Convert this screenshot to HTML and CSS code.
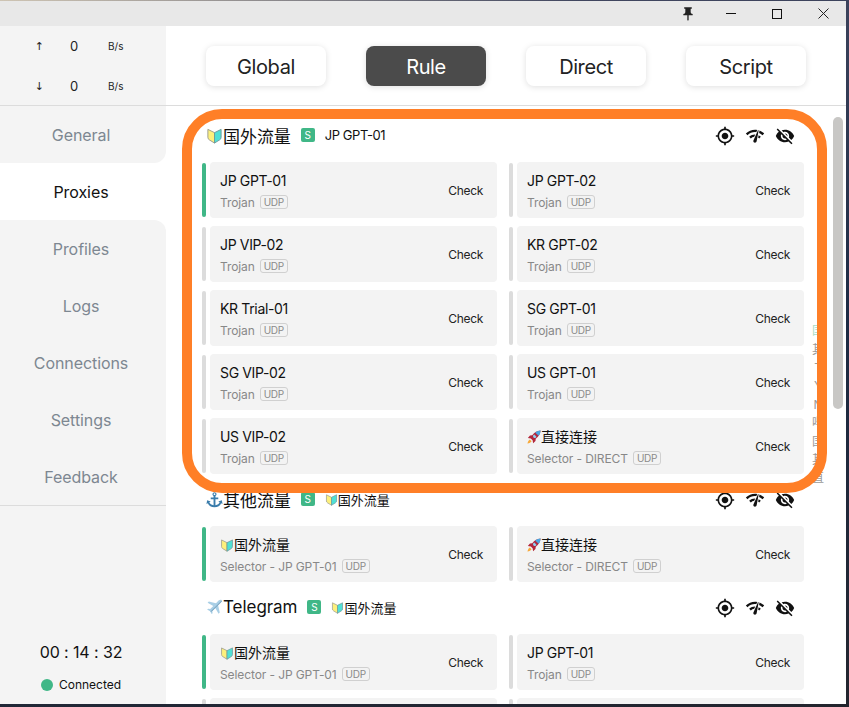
FILE: index.html
```html
<!DOCTYPE html>
<html lang="zh">
<head>
<meta charset="utf-8">
<title>Clash</title>
<link rel="stylesheet" href="styles.css">
</head>
<body>
<svg class="defs" aria-hidden="true">
  <symbol id="i-gps" viewBox="0 0 24 24"><path d="M12 8c-2.21 0-4 1.79-4 4s1.79 4 4 4 4-1.79 4-4-1.79-4-4-4zm8.94 3c-.46-4.17-3.77-7.48-7.94-7.94V1h-2v2.06C6.83 3.52 3.52 6.83 3.06 11H1v2h2.06c.46 4.17 3.77 7.48 7.94 7.94V23h2v-2.06c4.17-.46 7.48-3.77 7.94-7.94H23v-2h-2.06zM12 19c-3.87 0-7-3.13-7-7s3.13-7 7-7 7 3.13 7 7-3.13 7-7 7z"/></symbol>
  <symbol id="i-net" viewBox="0 0 24 24"><path d="M15.9 5c-.17 0-.32.09-.41.23l-.07.15-5.18 11.65c-.16.29-.26.61-.26.96 0 1.11.9 2.01 2.01 2.01.96 0 1.77-.68 1.96-1.59l.01-.03L16.4 5.5c0-.28-.22-.5-.5-.5zM1 9l2 2c2.88-2.88 6.79-4.08 10.53-3.62l1.19-2.68C9.89 3.84 4.74 5.27 1 9zm20 2l2-2c-1.64-1.64-3.55-2.82-5.59-3.57l-.53 2.82c1.5.62 2.9 1.53 4.12 2.75zm-4 4l2-2c-.8-.8-1.7-1.42-2.66-1.89l-.55 2.92c.42.27.83.59 1.21.97zM5 13l2 2c1.13-1.13 2.56-1.79 4.03-2l1.28-2.88c-2.63-.08-5.3.87-7.31 2.88z"/></symbol>
  <symbol id="i-eye" viewBox="0 0 24 24"><path d="M12 7c2.76 0 5 2.24 5 5 0 .65-.13 1.26-.36 1.83l2.92 2.92c1.51-1.26 2.7-2.89 3.43-4.75-1.73-4.39-6-7.5-11-7.5-1.4 0-2.74.25-3.98.7l2.16 2.16C10.74 7.13 11.35 7 12 7zM2 4.27l2.28 2.28.46.46C3.08 8.3 1.78 10.02 1 12c1.73 4.39 6 7.5 11 7.5 1.55 0 3.03-.3 4.38-.84l.42.42L19.73 22 21 20.73 3.27 3 2 4.27zM7.53 9.8l1.55 1.55c-.05.21-.08.43-.08.65 0 1.66 1.34 3 3 3 .22 0 .44-.03.65-.08l1.55 1.55c-.67.33-1.41.53-2.2.53-2.76 0-5-2.24-5-5 0-.79.2-1.53.53-2.2zm4.31-.78l3.15 3.15.02-.16c0-1.66-1.34-3-3-3l-.17.01z"/></symbol>
  <symbol id="e-shield" viewBox="0 0 16 18">
    <path d="M1 2.5 8 6v11L2.500 13.600Q1 12.700 1 11z" fill="#fdf07c" stroke="#9a9a8c" stroke-width="1"/>
    <path d="M15 2.500 8 6v11l5.500-3.400Q15 12.700 15 11z" fill="#4fe0d6" stroke="#6f9a9a" stroke-width="1"/>
  </symbol>
  <symbol id="e-anchor" viewBox="0 0 18 18">
    <path d="M9 1.200a2.200 2.200 0 0 1 1 4.150V7h3v1.800h-3v6.300c2.300-.3 3.900-1.500 4.500-3.100L13 11l3.800-1.200.7 4-1.500-.8C15 15.500 12.500 17.300 9 17.300S3 15.500 2 13l-1.500.8.7-4L5 11l-1.500 1c.6 1.600 2.200 2.800 4.500 3.100V8.800H5V7h3V5.350A2.200 2.200 0 0 1 9 1.200zm0 1.300a.9.900 0 1 0 0 1.800.9.900 0 0 0 0-1.800z" fill="#3a7cab"/>
  </symbol>
  <symbol id="e-plane" viewBox="0 0 18 18">
    <path d="M16.800 1.200c-.9-.9-2.600-.4-3.500.5L10.600 4.400 3 2.600 1.700 3.900l6 3.500-3.200 3.200-2.300-.4-1 1 3.100 1.700 1.700 3.100 1-1-.4-2.300 3.200-3.200 3.500 6 1.300-1.300-1.800-7.600 2.700-2.700c.9-.9 1.400-2.600.5-3.500z" fill="#a9cfe6"/>
    <path d="M16.800 1.200 4.500 13.500l1.700-.2L16.300 3.200c.6-.7.800-1.500.5-2z" fill="#7ba6c2"/>
  </symbol>
  <symbol id="e-rocket" viewBox="0 0 16 16">
    <path d="M15.500.5C11.800.7 8.500 2.600 6 6L3.400 6.300 1 9l3.300.6 2.100 2.100L7 15l2.700-2.400.3-2.600c3.400-2.500 5.300-5.800 5.500-9.500z" fill="#b3273c"/>
    <path d="M15.500.5c-2.300.1-4.400.9-6.200 2.300L13.200 6.700c1.400-1.800 2.200-3.900 2.300-6.200z" fill="#4aa6e0"/>
    <path d="M8.300 5.200a2 2 0 1 0 2.500 2.500z" fill="#8fd0f0"/>
    <path d="M3.200 10.800C1.800 11.500 1 13.300.5 15.500c2.200-.5 4-1.300 4.700-2.700z" fill="#f7a93a"/>
  </symbol>
</svg>

<div class="window">
  <div class="titlebar">
    <svg class="pin" viewBox="0 0 24 24"><path d="M16 9V4h1c.55 0 1-.45 1-1s-.45-1-1-1H7c-.55 0-1 .45-1 1s.45 1 1 1h1v5c0 1.660-1.340 3-3 3v2h5.970v7l1 1 1-1v-7H19v-2c-1.660 0-3-1.340-3-3z"/></svg>
    <span class="win-btn"><span class="win-min"></span></span>
    <span class="win-btn"><span class="win-max"></span></span>
    <span class="win-btn"><svg class="win-close" viewBox="0 0 11 11"><path d="M.5.5l10 10M10.500.5l-10 10"/></svg></span>
  </div>
  <div class="app">
    <aside class="sidebar">
      <div class="traffic">
        <div class="traffic-row"><span class="t-arrow">↑</span><span class="t-num">0</span><span class="t-unit">B/s</span></div>
        <div class="traffic-row"><span class="t-arrow">↓</span><span class="t-num">0</span><span class="t-unit">B/s</span></div>
      </div>
      <nav class="nav">
        <a class="nav-item before-active">General</a>
        <a class="nav-item active">Proxies</a>
        <a class="nav-item after-active">Profiles</a>
        <a class="nav-item">Logs</a>
        <a class="nav-item">Connections</a>
        <a class="nav-item">Settings</a>
        <a class="nav-item">Feedback</a>
      </nav>
      <div class="status">
        <div class="clock">00 : 14 : 32</div>
        <div class="conn"><span class="conn-dot"></span><span>Connected</span></div>
      </div>
    </aside>
    <main class="main">
      <header class="modes">
        <button class="mode">Global</button>
        <button class="mode selected">Rule</button>
        <button class="mode">Direct</button>
        <button class="mode">Script</button>
      </header>
      <div class="content">
        <section class="group">
          <div class="group-head">
            <span class="group-title"><svg class="emoji-l"><use href="#e-shield"/></svg>国外流量</span>
            <span class="badge">S</span>
            <span class="group-now">JP GPT-01</span>
            <span class="tools"><svg class="tool"><use href="#i-gps"/></svg><svg class="tool"><use href="#i-net"/></svg><svg class="tool"><use href="#i-eye"/></svg></span>
          </div>
          <div class="grid">
            <div class="proxy on"><div class="card"><div class="info"><div class="name">JP GPT-01</div><div class="sub">Trojan<span class="tag">UDP</span></div></div><span class="check">Check</span></div></div>
            <div class="proxy"><div class="card"><div class="info"><div class="name">JP GPT-02</div><div class="sub">Trojan<span class="tag">UDP</span></div></div><span class="check">Check</span></div></div>
            <div class="proxy"><div class="card"><div class="info"><div class="name">JP VIP-02</div><div class="sub">Trojan<span class="tag">UDP</span></div></div><span class="check">Check</span></div></div>
            <div class="proxy"><div class="card"><div class="info"><div class="name">KR GPT-02</div><div class="sub">Trojan<span class="tag">UDP</span></div></div><span class="check">Check</span></div></div>
            <div class="proxy"><div class="card"><div class="info"><div class="name">KR Trial-01</div><div class="sub">Trojan<span class="tag">UDP</span></div></div><span class="check">Check</span></div></div>
            <div class="proxy"><div class="card"><div class="info"><div class="name">SG GPT-01</div><div class="sub">Trojan<span class="tag">UDP</span></div></div><span class="check">Check</span></div></div>
            <div class="proxy"><div class="card"><div class="info"><div class="name">SG VIP-02</div><div class="sub">Trojan<span class="tag">UDP</span></div></div><span class="check">Check</span></div></div>
            <div class="proxy"><div class="card"><div class="info"><div class="name">US GPT-01</div><div class="sub">Trojan<span class="tag">UDP</span></div></div><span class="check">Check</span></div></div>
            <div class="proxy"><div class="card"><div class="info"><div class="name">US VIP-02</div><div class="sub">Trojan<span class="tag">UDP</span></div></div><span class="check">Check</span></div></div>
            <div class="proxy"><div class="card"><div class="info"><div class="name"><svg class="emoji-s"><use href="#e-rocket"/></svg>直接连接</div><div class="sub">Selector - DIRECT<span class="tag">UDP</span></div></div><span class="check">Check</span></div></div>
          </div>
        </section>
        <section class="group">
          <div class="group-head">
            <span class="group-title"><svg class="emoji-l"><use href="#e-anchor"/></svg>其他流量</span>
            <span class="badge">S</span>
            <span class="group-now"><svg class="emoji-n"><use href="#e-shield"/></svg>国外流量</span>
            <span class="tools"><svg class="tool"><use href="#i-gps"/></svg><svg class="tool"><use href="#i-net"/></svg><svg class="tool"><use href="#i-eye"/></svg></span>
          </div>
          <div class="grid">
            <div class="proxy on"><div class="card"><div class="info"><div class="name"><svg class="emoji-s"><use href="#e-shield"/></svg>国外流量</div><div class="sub">Selector - JP GPT-01<span class="tag">UDP</span></div></div><span class="check">Check</span></div></div>
            <div class="proxy"><div class="card"><div class="info"><div class="name"><svg class="emoji-s"><use href="#e-rocket"/></svg>直接连接</div><div class="sub">Selector - DIRECT<span class="tag">UDP</span></div></div><span class="check">Check</span></div></div>
          </div>
        </section>
        <section class="group">
          <div class="group-head">
            <span class="group-title"><svg class="emoji-l"><use href="#e-plane"/></svg>Telegram</span>
            <span class="badge">S</span>
            <span class="group-now"><svg class="emoji-n"><use href="#e-shield"/></svg>国外流量</span>
            <span class="tools"><svg class="tool"><use href="#i-gps"/></svg><svg class="tool"><use href="#i-net"/></svg><svg class="tool"><use href="#i-eye"/></svg></span>
          </div>
          <div class="grid">
            <div class="proxy on"><div class="card"><div class="info"><div class="name"><svg class="emoji-s"><use href="#e-shield"/></svg>国外流量</div><div class="sub">Selector - JP GPT-01<span class="tag">UDP</span></div></div><span class="check">Check</span></div></div>
            <div class="proxy"><div class="card"><div class="info"><div class="name">JP GPT-01</div><div class="sub">Trojan<span class="tag">UDP</span></div></div><span class="check">Check</span></div></div>
            <div class="proxy"><div class="card"></div></div>
            <div class="proxy"><div class="card"></div></div>
          </div>
        </section>
      </div>
      <div class="letters">
        <span class="cur">国</span><span>其</span><span>T</span><span>Y</span><span>N</span><span>哔</span><span>国</span><span>其</span><span>直</span>
      </div>
      <div class="scrollbar"></div>
      <div class="highlight"></div>
    </main>
  </div>
</div>
</body>
</html>
```

FILE: styles.css
```css
* { box-sizing: border-box; }
html, body { height: 100%; }
body {
  margin: 0;
  padding: 1px 3px 3px 0;
  overflow: hidden;
  background: linear-gradient(170deg, #cfc5b4 0%, #40465f 12%, #1d2b45 55%, #23252e 100%);
  font-family: Inter, "Noto Sans CJK SC", sans-serif;
  color: #111;
}
.defs { position: absolute; width: 0; height: 0; }
.window { height: 100%; display: flex; flex-direction: column; background: #fff; overflow: hidden; }

.titlebar { height: 25px; flex: none; background: #e8e8e8; display: flex; align-items: center; justify-content: flex-end; }
.pin { width: 16px; height: 16px; margin-right: 12px; fill: #222; }
.win-btn { width: 46px; height: 25px; display: flex; align-items: center; justify-content: center; }
.win-min { width: 10px; height: 1px; background: #111; }
.win-max { width: 10px; height: 10px; border: 1px solid #111; }
.win-close { width: 11px; height: 11px; stroke: #222; fill: none; stroke-width: 1; }

.app { flex: 1; min-height: 0; display: flex; }

.sidebar { width: 166px; flex: none; display: flex; flex-direction: column; background: #f4f4f4; }
.traffic { height: 80px; flex: none; border-bottom: 1px solid #dcdcdc; }
.traffic-row { height: 40px; display: grid; grid-template-columns: 65px 30px 1fr; align-items: center; color: #222; }
.t-arrow { font-family: "DejaVu Sans", sans-serif; font-size: 11px; text-align: right; padding-right: 21px; }
.t-num { font-size: 13px; padding-left: 5px; }
.t-unit { font-size: 10px; padding-left: 13px; }

.nav { display: flex; flex-direction: column; background: #fff; border-bottom: 1px solid #dcdcdc; }
.nav-item { height: 57px; padding-right: 4px; display: flex; align-items: center; justify-content: center; font-size: 16px; letter-spacing: -.08px; color: #7d8791; background: #f4f4f4; }
.nav-item.active { background: #fff; color: #111; }
.nav-item.before-active { border-bottom-right-radius: 12px; }
.nav-item.after-active { border-top-right-radius: 12px; }

.status { flex: 1; display: flex; flex-direction: column; justify-content: flex-end; align-items: center; padding: 0 4px 10px 0; }
.clock { font-size: 16px; line-height: 22px; letter-spacing: -.1px; margin-bottom: 13px; }
.conn { display: flex; align-items: center; gap: 6px; font-size: 12px; line-height: 18px; }
.conn-dot { width: 12px; height: 12px; border-radius: 50%; background: #40b787; }

.main { flex: 1; min-width: 0; position: relative; display: flex; flex-direction: column; }
.modes { height: 80px; flex: none; display: flex; gap: 40px; padding: 20px 0 0 40px; border-bottom: 1px solid #dcdcdc; }
.mode { width: 120px; height: 40px; border: 0; border-radius: 8px; background: #fff; color: #222; font: 20px/24px Inter, sans-serif; letter-spacing: -.4px; box-shadow: 0 1px 6px rgba(0, 0, 0, .13); padding: 1px 0 0; }
.mode.selected { background: #4b4b4b; color: #fff; }

.content { flex: 1; min-height: 0; overflow: hidden; padding: 4px 0 0 36px; width: 638px; }
.group-head { height: 52px; padding: 0 0 2px 4px; display: flex; align-items: center; }
.group-title { display: flex; align-items: center; font-size: 17px; letter-spacing: -.05px; }
.emoji-l { width: 17px; height: 17px; }
.emoji-s { width: 14px; height: 14px; flex: none; }
.emoji-n { width: 13px; height: 13px; flex: none; }
.badge { width: 14px; height: 14px; margin-left: 10px; border-radius: 2px; background: #40b787; color: #fff; font-size: 10px; display: flex; align-items: center; justify-content: center; }
.group-now { margin-left: 10px; font-size: 13px; display: flex; align-items: center; }
.group-now:not(:has(svg)) { letter-spacing: -.45px; }
.tools { margin: 2px 9px 0 auto; display: flex; gap: 10px; }
.tool { width: 20px; height: 20px; fill: #111; }

.grid { display: grid; grid-template-columns: 295px 295px; column-gap: 12px; row-gap: 8px; }
.proxy { height: 56px; display: flex; align-items: center; gap: 4px; }
.proxy::before { content: ""; width: 4px; height: 54px; flex: none; border-radius: 2px; background: #dcdcdc; }
.proxy.on::before { background: #40b787; }
.card { flex: 1; height: 56px; border-radius: 4px; background: #f3f3f3; padding: 0 14px 0 10px; display: flex; align-items: center; justify-content: space-between; }
.info { padding-top: 2px; }
.name { font-size: 14px; line-height: 20px; letter-spacing: -.35px; display: flex; align-items: center; }
.name:has(svg) { letter-spacing: 0; }
.sub { font-size: 12px; line-height: 18px; margin-top: 3px; letter-spacing: -.1px; color: #888; display: flex; align-items: center; }
.tag { margin: 0 0 2px 5px; border: 1px solid #d0d0d0; border-radius: 3px; font-size: 10px; line-height: 12px; letter-spacing: -.3px; padding: 0 3px; color: #8a8a8a; }
.check { font-size: 12px; letter-spacing: -.3px; color: #222; }

.letters { position: absolute; right: 21px; top: 80px; bottom: 0; width: 14px; display: flex; flex-direction: column; justify-content: center; align-items: center; font-size: 12px; line-height: 18.4px; color: #9a9a9a; }
.letters .cur { color: #a8dcc4; }
.scrollbar { position: absolute; right: 3px; top: 91px; width: 10px; height: 292px; border-radius: 5px; background: #c8c7c5; }
.highlight { position: absolute; left: 16px; top: 83px; width: 645px; height: 384px; border: 10px solid #ff7f27; border-radius: 40px; pointer-events: none; }
```
